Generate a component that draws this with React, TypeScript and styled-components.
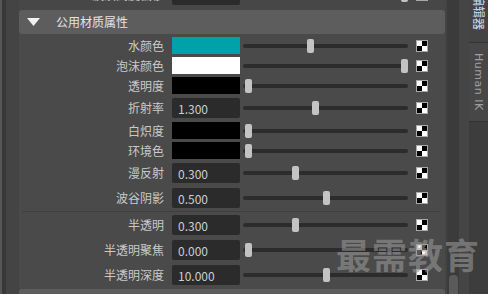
import React from 'react';
import styled, { createGlobalStyle } from 'styled-components';

type Row =
  | { kind: 'color'; label: string; color: string; pos: number }
  | { kind: 'number'; label: string; value: string; pos: number };

const upperRows: Row[] = [
  { kind: 'color', label: '水颜色', color: '#00a1a9', pos: 0.4 },
  { kind: 'color', label: '泡沫颜色', color: '#ffffff', pos: 1 },
  { kind: 'color', label: '透明度', color: '#000000', pos: 0 },
  { kind: 'number', label: '折射率', value: '1.300', pos: 0.43 },
  { kind: 'color', label: '白炽度', color: '#000000', pos: 0 },
  { kind: 'color', label: '环境色', color: '#000000', pos: 0 },
  { kind: 'number', label: '漫反射', value: '0.300', pos: 0.3 },
  { kind: 'number', label: '波谷阴影', value: '0.500', pos: 0.5 },
];

const lowerRows: Row[] = [
  { kind: 'number', label: '半透明', value: '0.300', pos: 0.3 },
  { kind: 'number', label: '半透明聚焦', value: '0.000', pos: 0 },
  { kind: 'number', label: '半透明深度', value: '10.000', pos: 0.5 },
];

const GlobalStyle = createGlobalStyle`
html, body {
  margin: 0;
  padding: 0;
  background: #444444;
}
body {
  font-family: "Noto Sans CJK SC", "Noto Sans", sans-serif;
}
`;

const AttrRow: React.FC<{ row: Row }> = ({ row }) => (
  <RowLine $numeric={row.kind === 'number'}>
    <Label>{row.label}</Label>
    {row.kind === 'color' ? (
      <Swatch $color={row.color} />
    ) : (
      <Field>{row.value}</Field>
    )}
    <Track>
      <Handle style={{ left: 2 + row.pos * 156 }} />
    </Track>
    <MapButton />
  </RowLine>
);

const App: React.FC = () => {
  return (
    <Frame>
      <GlobalStyle />
      <LeftEdge />
      <Panel>
        <PrevBody>
          <AttrRow row={{ kind: 'number', label: '波浪高度偏移', value: '', pos: 1 }} />
        </PrevBody>
        <Header>
          <Caret viewBox="0 0 13 8">
            <polygon points="0,0 13,0 6.5,8" fill="#f2f2f2" />
          </Caret>
          <Title>公用材质属性</Title>
        </Header>
        <Body>
          {upperRows.map((r) => (
            <AttrRow key={r.label} row={r} />
          ))}
          <Divider />
          {lowerRows.map((r) => (
            <AttrRow key={r.label} row={r} />
          ))}
        </Body>
        <Header />
      </Panel>
      <ScrollTrack>
        <Thumb />
      </ScrollTrack>
      <Gutter />
      <TabBar>
        <TopTab>
          <VerticalCjk>属性编辑器</VerticalCjk>
        </TopTab>
        <HumanTab>
          <VerticalLatin>Human IK</VerticalLatin>
        </HumanTab>
      </TabBar>
      <Watermark>最需教育</Watermark>
    </Frame>
  );
};

const Frame = styled.div`
position: relative;
display: flex;
width: 488px;
height: 294px;
overflow: hidden;
background-color: #444444;
`;

const LeftEdge = styled.div`
width: 4px;
border-left: 2px solid #575757;
background-color: #383838;
flex-shrink: 0;
`;

const Panel = styled.div`
display: flex;
flex-direction: column;
width: 441px;
padding: 0 2px 0 13px;
box-sizing: border-box;
overflow: hidden;
flex-shrink: 0;
`;

const PrevBody = styled.div`
margin-top: -17px;
padding-bottom: 2px;
background-color: #474747;
`;

const Header = styled.div`
display: flex;
align-items: center;
flex-shrink: 0;
height: 24px;
border-radius: 3px;
background-color: #5d5d5d;
`;

const Caret = styled.svg`
width: 13px;
height: 8px;
margin-left: 8px;
`;

const Title = styled.span`
margin-left: 16px;
font-size: 12px;
line-height: 1;
color: #e4e4e4;
`;

const Body = styled.div`
display: flex;
flex-direction: column;
flex-shrink: 0;
padding: 2px 0 1px;
background-color: #4a4a4a;
`;

const RowLine = styled.div<{ $numeric: boolean }>`
display: flex;
align-items: center;
padding: ${(p) => (p.$numeric ? '2px 0 3px' : '1px 0 2px')};
`;

const Label = styled.div`
width: 145px;
text-align: right;
font-size: 12px;
line-height: 1;
color: #c9c9c9;
white-space: nowrap;
`;

const Swatch = styled.div<{ $color: string }>`
width: 68px;
height: 17px;
margin-left: 8px;
background-color: ${(p) => p.$color};
`;

const Field = styled.div`
display: flex;
align-items: center;
width: 68px;
height: 20px;
margin-left: 8px;
padding-left: 6px;
box-sizing: border-box;
border-radius: 2px;
background-color: #2b2b2b;
font-size: 12px;
color: #c8cfd6;
`;

const Track = styled.div`
position: relative;
width: 165px;
height: 4px;
margin-left: 3px;
border-radius: 2px;
background-color: #2c2c2c;
`;

const Handle = styled.div`
position: absolute;
top: -5px;
width: 7px;
height: 14px;
border-radius: 2px;
background-color: #c3c3c3;
`;

const MapButton = styled.div`
width: 10px;
height: 10px;
margin-left: 8px;
border: 1px solid #a9a9a9;
background: conic-gradient(#000 0 25%, #fff 0 50%, #000 0 75%, #fff 0);
`;

const Divider = styled.div`
height: 1px;
margin: 0 5px 1px 3px;
background-color: #3f3f3f;
`;

const ScrollTrack = styled.div`
display: flex;
flex-direction: column;
justify-content: flex-end;
width: 12px;
padding: 0 1px 0 2px;
box-sizing: border-box;
background-color: #3b3b3b;
flex-shrink: 0;
`;

const Thumb = styled.div`
height: 26px;
margin-bottom: -7px;
border-radius: 4px;
background-color: #5a5a5a;
`;

const Gutter = styled.div`
width: 10px;
background-color: #454545;
flex-shrink: 0;
`;

const TabBar = styled.div`
display: flex;
flex-direction: column;
width: 19px;
background-color: #3d3d3d;
flex-shrink: 0;
`;

const TopTab = styled.div`
display: flex;
flex-direction: column;
justify-content: flex-end;
align-items: center;
height: 42px;
padding-bottom: 12px;
box-sizing: border-box;
overflow: hidden;
background-color: #444444;
`;

const VerticalCjk = styled.span`
writing-mode: vertical-rl;
text-orientation: sideways;
font-size: 12px;
line-height: 1;
color: #cfdcea;
white-space: nowrap;
`;

const HumanTab = styled.div`
display: flex;
justify-content: center;
height: 80px;
padding-top: 10px;
box-sizing: border-box;
border-top: 1px solid #333333;
border-bottom: 1px solid #333333;
background-color: #474747;
`;

const VerticalLatin = styled.span`
writing-mode: vertical-rl;
font-family: "DejaVu Sans", "Noto Sans", sans-serif;
font-size: 11px;
line-height: 1;
letter-spacing: 0.5px;
color: #a0a0a0;
white-space: nowrap;
`;

const Watermark = styled.div`
position: absolute;
left: 336px;
top: 236px;
font-size: 35px;
font-weight: 700;
line-height: 1;
letter-spacing: 1px;
color: rgba(150, 150, 150, 0.62);
pointer-events: none;
white-space: nowrap;
`;

export default App;
